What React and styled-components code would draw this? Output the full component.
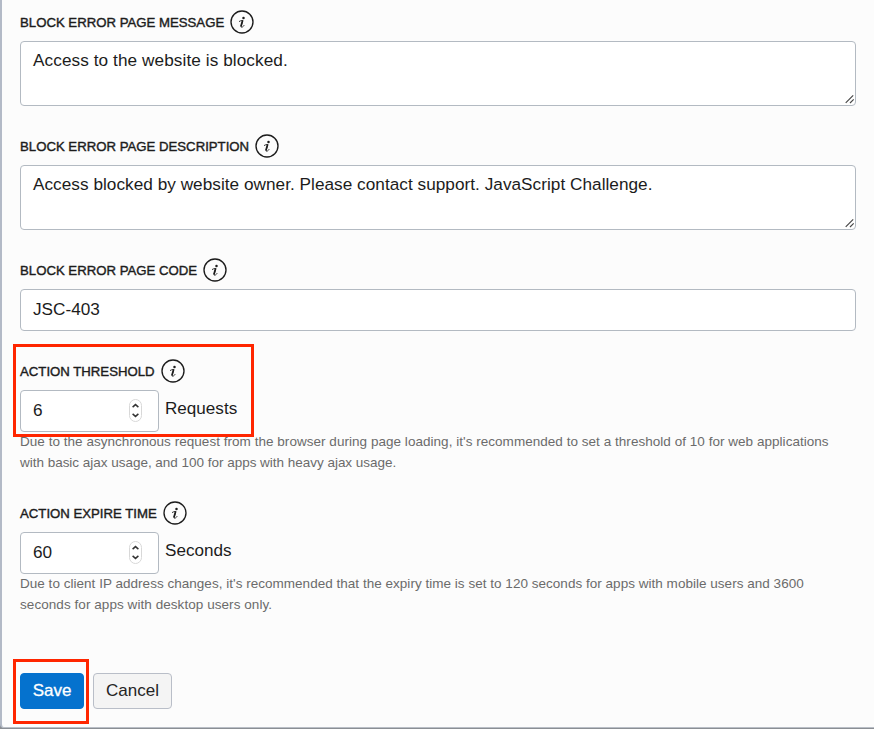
import React from "react";
import styled, { createGlobalStyle } from "styled-components";

const GlobalStyle = createGlobalStyle`
  * { box-sizing: border-box; }
  html, body { margin: 0; padding: 0; }
  body { background: #8a8e94; overflow: hidden; font-family: "Liberation Sans", Arial, sans-serif; color: #1c1c1c; }
`;

const Panel = styled.main`
  width: 874px;
  height: 728px;
  padding: 11px 18px 0;
  border-left: 2px solid #b3bac7;
  border-bottom: 1px solid #b9bec6;
  border-bottom-left-radius: 4px;
  background: #fcfcfc;
`;
const Field = styled.section`
  position: relative;
  height: ${(p) => p.$height}px;
`;
const LabelRow = styled.div`
  display: flex;
  align-items: center;
  gap: 6px;
  height: 23px;
`;
const Label = styled.label`
  font-size: 13.2px;
  line-height: 23px;
  white-space: nowrap;
  -webkit-text-stroke: 0.4px #1c1c1c;
`;
const InfoSvg = styled.svg`
  display: block;
  width: 24px;
  height: 24px;
  margin-bottom: 1px;
  flex: none;
`;
const TextArea = styled.div`
  position: relative;
  width: 836px;
  height: 65px;
  margin-top: 7px;
  padding: 7px 12px;
  border: 1px solid #b3bac2;
  border-radius: 4px;
  background: #fff;
  font-size: 17.2px;
  line-height: 22px;
  letter-spacing: ${(p) => p.$spacing || 0}px;
`;
const Grip = styled.svg`
  position: absolute;
  right: 0;
  bottom: 1px;
  width: 10px;
  height: 10px;
`;
const TextInput = styled.div`
  display: flex;
  align-items: center;
  justify-content: space-between;
  width: ${(p) => p.$width}px;
  height: 42px;
  padding: 0 16px 1px 12px;
  border: 1px solid #b3bac2;
  border-radius: 4px;
  background: #fff;
  font-size: 17.2px;
`;
const InputRow = styled.div`
  display: flex;
  gap: 6px;
  margin-top: 7px;
`;
const Stepper = styled.svg`
  width: 13px;
  height: 23px;
`;
const Unit = styled.span`
  font-size: 17.1px;
  line-height: 38px;
`;
const Help = styled.p`
  margin: -1px 0 0;
  font-size: 13.5px;
  line-height: 21px;
  color: #6b6b6b;
`;
const HelpLine = styled.span`
  display: block;
  white-space: nowrap;
  letter-spacing: ${(p) => p.$spacing || 0}px;
`;
const Highlight = styled.div`
  position: absolute;
  left: -7px;
  top: ${(p) => p.$top}px;
  width: ${(p) => p.$width}px;
  height: ${(p) => p.$height}px;
  border: 3px solid #ff2600;
  pointer-events: none;
`;
const Actions = styled.footer`
  position: relative;
  display: flex;
  gap: 9px;
`;
const Button = styled.button`
  width: ${(p) => p.$width}px;
  height: 36px;
  padding: 0;
  border: 1px solid ${(p) => (p.$primary ? "#0572ce" : "#b9bec8")};
  border-radius: 4px;
  background: ${(p) => (p.$primary ? "#0572ce" : "#f4f4f4")};
  color: ${(p) => (p.$primary ? "#fff" : "#252525")};
  -webkit-text-stroke: ${(p) => (p.$primary ? "0.3px #fff" : "0")};
  font: 17px "Liberation Sans", Arial, sans-serif;
`;

const Info = () => (
  <InfoSvg viewBox="0 0 24 24" fill="none" stroke="#1c1c1c">
    <circle cx="12" cy="12" r="11" strokeWidth="1.35" />
    <circle cx="13.5" cy="7.9" r="1.25" fill="#1c1c1c" stroke="none" />
    <path d="M9 11.6Q10.3 10.6 12.9 10.4L11.1 16.2Q10.9 17.8 12.4 17Q13.6 16.3 14.2 15.2" strokeWidth="0.9" />
    <path d="M12.6 10.6L10.9 16.6" strokeWidth="1.7" />
  </InfoSvg>
);
const Resize = () => (
  <Grip viewBox="0 0 10 10" stroke="#484848" strokeWidth="1.2" fill="none">
    <path d="M.7 8.8L8.2 1.3M5 9L8.7 5.3" />
  </Grip>
);
const Spin = () => (
  <Stepper viewBox="0 0 13 23" fill="none">
    <rect x=".5" y=".5" width="12" height="22" rx="6" stroke="#d8d8d8" fill="#fff" />
    <path d="M3.6 8.1L6.5 5.6L9.4 8.1M3.6 14.9L6.5 17.4L9.4 14.9" stroke="#333" strokeWidth="1.5" />
  </Stepper>
);
const Heading = ({ text }) => (
  <LabelRow>
    <Label>{text}</Label>
    <Info />
  </LabelRow>
);

export default function App() {
  return (
    <>
      <GlobalStyle />
      <Panel>
        <Field $height={124}>
          <Heading text="BLOCK ERROR PAGE MESSAGE" />
          <TextArea $spacing={0.08}>Access to the website is blocked.<Resize /></TextArea>
        </Field>
        <Field $height={124}>
          <Heading text="BLOCK ERROR PAGE DESCRIPTION" />
          <TextArea $spacing={0.03}>Access blocked by website owner. Please contact support. JavaScript Challenge.<Resize /></TextArea>
        </Field>
        <Field $height={101}>
          <Heading text="BLOCK ERROR PAGE CODE" />
          <InputRow><TextInput $width={836}>JSC-403</TextInput></InputRow>
        </Field>
        <Field $height={142}>
          <Heading text="ACTION THRESHOLD" />
          <InputRow>
            <TextInput $width={139}>6<Spin /></TextInput>
            <Unit>Requests</Unit>
          </InputRow>
          <Help>
            <HelpLine $spacing={0.035}>Due to the asynchronous request from the browser during page loading, it's recommended to set a threshold of 10 for web applications</HelpLine>
            <HelpLine $spacing={-0.02}>with basic ajax usage, and 100 for apps with heavy ajax usage.</HelpLine>
          </Help>
          <Highlight $top={-16} $width={241} $height={93} />
        </Field>
        <Field $height={171}>
          <Heading text="ACTION EXPIRE TIME" />
          <InputRow>
            <TextInput $width={139}>60<Spin /></TextInput>
            <Unit>Seconds</Unit>
          </InputRow>
          <Help>
            <HelpLine $spacing={0.025}>Due to client IP address changes, it's recommended that the expiry time is set to 120 seconds for apps with mobile users and 3600</HelpLine>
            <HelpLine $spacing={0.06}>seconds for apps with desktop users only.</HelpLine>
          </Help>
        </Field>
        <Actions>
          <Button $primary $width={64}>Save</Button>
          <Button $width={79}>Cancel</Button>
          <Highlight $top={-14} $width={76} $height={65} />
        </Actions>
      </Panel>
    </>
  );
}
